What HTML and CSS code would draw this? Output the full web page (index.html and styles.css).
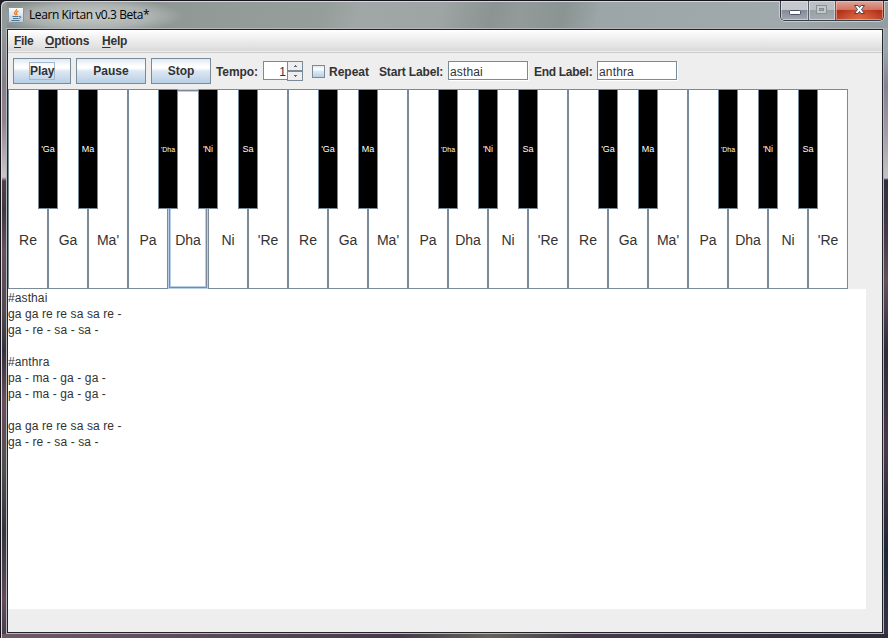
FILE: index.html
```html
<!DOCTYPE html>
<html lang="en">
<head>
<meta charset="utf-8">
<title>Learn Kirtan v0.3 Beta*</title>
<link rel="stylesheet" href="styles.css">
</head>
<body>
<div class="window">
  <header class="titlebar">
    <svg class="logo" width="16" height="16" viewBox="0 0 16 16">
      <defs><linearGradient id="lg" x2="0" y2="1"><stop offset="0" stop-color="#fdfdfd"/><stop offset="1" stop-color="#bccbd8"/></linearGradient></defs>
      <rect x=".5" y=".5" width="15" height="15" rx="1" fill="url(#lg)" stroke="#8496a5"/>
      <path d="M8.500 2c1 2-3 3-2 4.500l1.300 1.700M10.500 4.200c-2.500 1-2.700 2-1.200 4" fill="none" stroke="#e8822a" stroke-width="1.300"/>
      <path d="M4.500 9.500h6M5 11.500h5.500M3.500 13.500h8M11 9.500c2.500-.8 2.500 1.500 0 2" fill="none" stroke="#4b7595"/>
    </svg>
    <span class="title">Learn Kirtan v0.3 Beta*</span>
    <div class="controls">
      <span class="ctl min"><svg width="28" height="19"><rect x="8.500" y="10.500" width="11" height="4" rx="1" fill="#fff" stroke="#4b4f62"/></svg></span>
      <span class="ctl max"><svg width="26" height="19"><rect x="7.500" y="5.500" width="10" height="8" fill="#c3c7ca" stroke="#8c9196"/><rect x="10.500" y="8.500" width="4" height="2" fill="#a3a9ad" stroke="#858b90"/></svg></span>
      <span class="ctl close"><svg width="46" height="19"><path d="M18.500 5.500h3.500l1.500 2 1.500-2h3.500L25.500 9.500l3 4H25l-1.500-2-1.500 2h-3.500l3-4z" fill="#fff" stroke="#4b4553"/></svg></span>
    </div>
  </header>
  <main class="client">
    <nav class="menu"><span class="m-file"><u>F</u>ile</span><span class="m-options"><u>O</u>ptions</span><span class="m-help"><u>H</u>elp</span></nav>
    <section class="toolbar">
      <button class="btn play"><span class="focus">Play</span></button>
      <button class="btn pause">Pause</button>
      <button class="btn stop">Stop</button>
      <label class="tempo">Tempo:</label>
      <div class="spinner"><span class="value">1</span><span class="arrows"><i><svg width="3" height="2"><path d="M1 0h1v1h1v1H0V1h1z"/></svg></i><i><svg width="3" height="2"><path d="M0 0h3v1H2v1H1V1H0z"/></svg></i></span></div>
      <span class="check"></span>
      <label class="repeat">Repeat</label>
      <label class="start">Start Label:</label>
      <span class="field">asthai</span>
      <label class="end">End Label:</label>
      <span class="field">anthra</span>
    </section>
    <section class="piano" id="piano"></section>
    <pre class="notes">#asthai
ga ga re re sa sa re -
ga - re - sa - sa -

#anthra
pa - ma - ga - ga -
pa - ma - ga - ga -

ga ga re re sa sa re -
ga - re - sa - sa -</pre>
  </main>
</div>
<script src="piano.js"></script>
</body>
</html>
```
FILE: piano.js
```js
const piano = document.getElementById('piano');
// Each white key, with the black key that overlaps its right edge.
const octave = [['Re', "'Ga"], ['Ga', 'Ma'], ["Ma'"], ['Pa', "'Dha"], ['Dha', "'Ni"], ['Ni', 'Sa'], ["'Re"]];
for (let o = 0; o < 3; o++) {
  octave.forEach(([white, black], i) => {
    const key = document.createElement('div');
    key.className = 'key' + (o === 0 && i === 4 ? ' focused' : '');
    const name = document.createElement('span');
    name.textContent = white;
    key.append(name);
    if (black) {
      const sharp = document.createElement('div');
      sharp.className = 'black' + (black === "'Dha" ? ' small' : '');
      sharp.textContent = black;
      key.append(sharp);
    }
    piano.append(key);
  });
}
```
FILE: styles.css
```css
* { box-sizing: border-box; }
body { margin: 0; width: 888px; height: 638px; overflow: hidden; background: #20202a; font: 12px "Liberation Sans", Arial, sans-serif; color: #333; }
.window {
  width: 888px; height: 638px; padding: 0 5px 5px 6px; border-left: 1px solid #15151b; border-top: 1px solid #15131c; border-radius: 6px 0 0 0;
  box-shadow: inset 1px 1px #d5d8d8;
  background:
    linear-gradient(90deg, #6f5969, #47394a 45%, #666258 55%, #47394a 65%, #2e2b3c) 0 633px / 100% 5px no-repeat,
    linear-gradient(#9ca5aa 50px, #858292 85px, #a39aa5 130px, #c4c3c8 177px, #302d40 179px, #493b4b 240px, #65505c 280px, #2e2b3c 350px, #49394b 450px, #202638 550px, #35334a) 100% 0 / 8px 100% no-repeat,
    linear-gradient(#929a98 28px, #857f88 80px, #91838d 120px, #cbc6c8 176px, #504047 180px, #403941 210px, #66515c 250px, #554953 310px, #33313d 350px, #6b4d5e 400px, #514f4b 470px, #343340 530px, #634b5a 600px, #483c50);
}
.titlebar {
  position: relative; display: flex; height: 26px; padding: 5px 0 0 1px; margin: 1px -5px 0 0;
  background: radial-gradient(ellipse 95px 18px at 82px 14px, rgba(225,227,226,.7), rgba(210,214,213,.45) 65%, transparent),
    linear-gradient(105deg, #858e8c 0, #939b98 25%, #969e9b 36%, #a0a7a6 40%, #9ea5a4 49%, #8b9492 55%, #929b99 58%, #8a9492 63%, #9ca5a7 67%, #a0a9ab 87%, #929da1);
}
.logo { flex: none; }
.title { margin: -1px 0 0 5px; font: 12px/17px "Open Sans", "Noto Sans", sans-serif; color: #000; letter-spacing: -.42px; white-space: nowrap; }
.controls { position: absolute; top: -1px; right: 4px; display: flex; width: 104px; height: 20px; border: 1px solid #393d45; border-top: 0; border-radius: 0 0 5px 5px; overflow: hidden; box-shadow: 0 1px 0 #c6cdcf, 1px 0 #c6cdcf, -1px 0 #c6cdcf; }
.ctl { display: block; height: 19px; box-shadow: inset 0 0 0 1px rgba(240,243,245,.5); }
.ctl svg { display: block; margin-top: -1px; }
.min { width: 28px; border-right: 1px solid #575d66; background: linear-gradient(#c5c9ce 46%, #858c99 50%, #a2a8b1); }
.max { width: 27px; border-right: 1px solid #575d66; background: linear-gradient(#bac0c3 46%, #9aa1a6 50%, #a5abb0); }
.close { width: 47px; background: radial-gradient(ellipse at 50% 100%, rgba(235,120,70,.75), transparent 65%), linear-gradient(#dda69a, #cf7465 46%, #b33018 50%, #bc4934); box-shadow: inset 0 0 0 1px rgba(255,205,190,.5); }
.client { height: 604px; border: 1px solid #222429; outline: 1px solid #b4b7ba; background: #eee; margin-top: 1px; }
.menu { display: flex; height: 23px; padding: 4px 0 0 6px; border-bottom: 1px solid #ccc; background: linear-gradient(#fff, #dadada 21px, #eee 21px); font-weight: bold; line-height: 15px; }
.m-file { width: 31px; letter-spacing: -.3px; }
.m-options { width: 57px; letter-spacing: -.15px; }
.m-help { letter-spacing: -.2px; }
.menu u { text-underline-offset: 2px; text-decoration-thickness: 1px; }
.toolbar { display: flex; align-items: center; height: 36px; padding: 0 0 0 5px; font-weight: bold; white-space: nowrap; }
.btn { flex: none; height: 26px; padding: 0; border: 1px solid #7a8a99; background: linear-gradient(#dfe9f2, #fff 30%, #fff 38%, #dde8f3 50%, #b8cfe5); font: bold 12px "Liberation Sans", Arial, sans-serif; color: #333; }
.play { width: 58px; margin-right: 5px; }
.focus { display: inline-block; width: 26px; height: 18px; line-height: 17px; border: 1px solid #a3b8cc; letter-spacing: -.1px; }
.pause { width: 70px; margin-right: 5px; }
.stop { width: 60px; margin-right: 5px; }
.tempo { width: 47px; letter-spacing: -.1px; line-height: 14px; padding-top: 1px; }
.spinner { display: flex; flex: none; width: 40px; height: 20px; margin-right: 9px; }
.value { width: 25px; height: 19px; padding-right: 2px; border: 1px solid #7a8a99; border-right: 0; background: #fff; font-weight: normal; line-height: 20px; text-align: right; }
.arrows { width: 16px; margin-left: -1px; }
.arrows i { display: flex; align-items: center; justify-content: center; height: 10px; border: 1px solid #7a8a99; background: #eee; }
.arrows svg { fill: #596875; }
.check { flex: none; width: 13px; height: 13px; margin-right: 4px; border: 1px solid #7a8a99; background: linear-gradient(#dfe9f2, #fff 30%, #dde8f3 50%, #b8cfe5); }
.repeat, .start, .end { line-height: 14px; padding-top: 1px; }
.repeat { width: 50px; }
.start { width: 69px; letter-spacing: -.15px; }
.end { width: 63px; margin-left: 6px; letter-spacing: -.3px; }
.field { flex: none; width: 80px; height: 19px; padding-left: 1px; border: 1px solid #7a8a99; background: #fff; box-shadow: 1px 1px #fff; font-weight: normal; line-height: 20px; margin-top: -1px; letter-spacing: .15px; }
.piano { display: grid; grid-template-columns: repeat(21, 40px); width: 840px; height: 200px; background: #fff; }
.key { position: relative; border: 1px solid #7a8a99; background: #fff; padding-top: 142px; text-align: center; font-size: 14px; line-height: 16px; }
.focused { border-color: #b8cfe5; }
.focused::before { content: ""; position: absolute; inset: 0; border: 1px solid #7a8a99; box-shadow: inset 0 0 0 1px #b8cfe5; }
.black { position: absolute; z-index: 1; top: -1px; left: 29px; width: 20px; height: 120px; border: 1px solid #7a8a99; background: #000; color: #fff; font-size: 9px; line-height: 118px; white-space: nowrap; display: flex; justify-content: center; }
.focused .black { top: -1px; }
.small { font-size: 7px; line-height: 119px; }
.notes { width: 858px; height: 320px; margin: 0; padding-top: 1px; background: #fff; font: 12px/16px "Liberation Sans", Arial, sans-serif; letter-spacing: .1px; }
```
